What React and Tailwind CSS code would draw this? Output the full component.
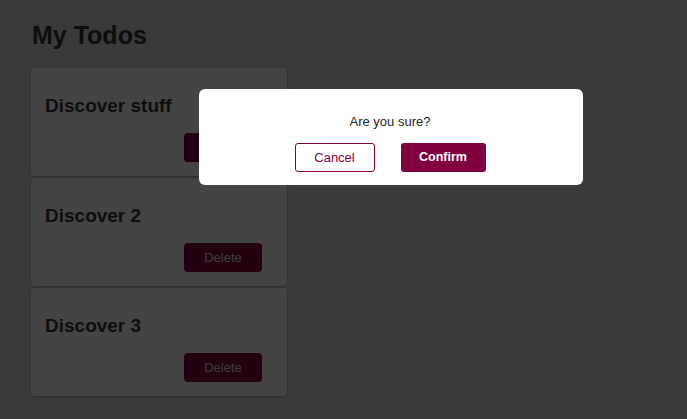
const todos = ['Discover stuff', 'Discover 2', 'Discover 3']

function TodoCard({ text }) {
  return (
    <div className="h-[108px] rounded-[4px] bg-white shadow-[0_1px_3px_rgba(0,0,0,0.25)] pl-[14px] pr-[25px] pt-[25px]">
      <h2 className="text-[19px] leading-[26px] font-bold text-[#333]">{text}</h2>
      <div className="mt-[14px] flex justify-end">
        <button className="w-[78px] h-[29px] rounded-[4px] bg-[#800040] text-[#e0e0e0] text-[13px]">
          Delete
        </button>
      </div>
    </div>
  )
}

export default function App() {
  return (
    <div
      className="relative min-h-[419px] bg-[#d9d9d9] px-[32px] pt-[18px]"
      style={{ fontFamily: '"Liberation Sans", Arial, sans-serif' }}
    >
      <h1 className="text-[25px] leading-[34px] font-bold text-[#333]">My Todos</h1>
      <div className="mt-[16px] ml-[-1px] w-[256px] flex flex-col gap-[2px]">
        {todos.map(t => (
          <TodoCard key={t} text={t} />
        ))}
      </div>

      <div className="fixed inset-0 bg-[rgba(0,0,0,0.733)]">
        <div className="absolute left-[199px] top-[89px] w-[384px] h-[96px] rounded-[6px] bg-white flex flex-col items-center pt-[25px] pr-[2px]">
          <p className="text-[13px] leading-[16px] text-[#222]">Are you sure?</p>
          <div className="mt-[13px] flex gap-[26px]">
            <button className="w-[80px] h-[29px] rounded-[3px] border border-[#800040] text-[#800040] text-[13px] bg-white">
              Cancel
            </button>
            <button className="w-[85px] h-[29px] rounded-[3px] bg-[#800040] text-white text-[12.5px] font-bold">
              Confirm
            </button>
          </div>
        </div>
      </div>
    </div>
  )
}
